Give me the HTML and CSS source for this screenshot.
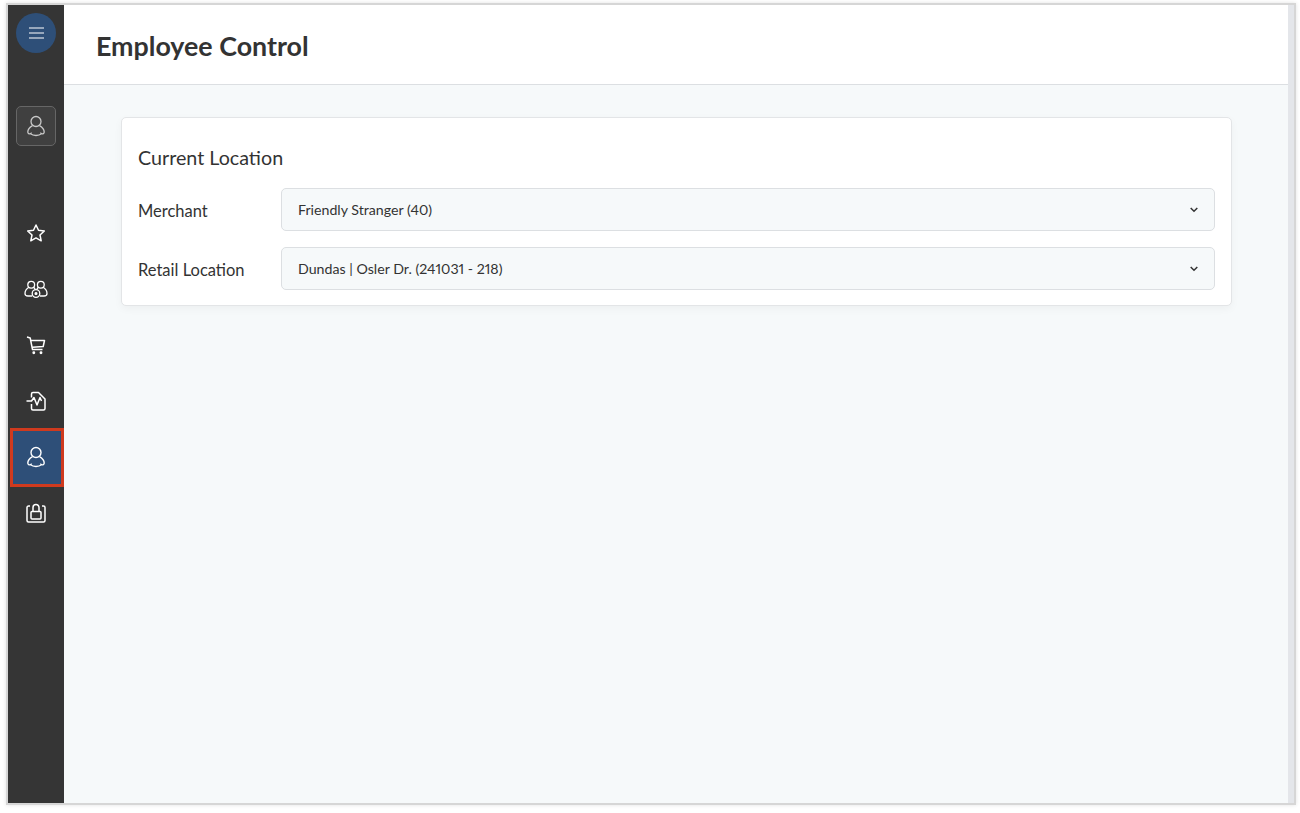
FILE: index.html
```html
<!DOCTYPE html>
<html lang="en">
<head>
<meta charset="utf-8">
<title>Employee Control</title>
<link rel="stylesheet" href="styles.css">
</head>
<body>
<div class="window">
  <aside class="sidebar">
    <button class="menu-btn" aria-label="Menu">
      <svg width="15" height="12" viewBox="0 0 15 12" fill="none" stroke="#fff" stroke-width="1.2"><path d="M0 1h15M0 6h15M0 11h15"/></svg>
    </button>
    <button class="profile-btn" aria-label="Profile">
      <svg class="icon" viewBox="0 0 22 22" fill="none" stroke="#c9c9c9" stroke-width="1.3"><circle cx="11" cy="6.500" r="5"/><path d="M7.500 10.600C5 12 2.800 14.700 2.800 17c0 1.600 1.500 2.300 2.700 1.500.4-.3.800-.5 1.300-.2"/><path d="M14.500 10.600C17 12 19.200 14.700 19.200 17c0 1.600-1.500 2.300-2.700 1.500-.4-.3-.8-.5-1.300-.2"/><path d="M5 18.500c2 1.400 4 2 6 2s4-.6 6-2"/></svg>
    </button>
    <nav class="nav">
      <a class="nav-item"><svg class="icon" viewBox="0 0 22 22" fill="none" stroke="#fff" stroke-width="1.500" stroke-linejoin="round"><path d="M11 3l2.500 5.300 5.800.7-4.300 4 1.200 5.800L11 15.900l-5.200 2.900L7 13 2.700 9l5.800-.7z"/></svg></a>
      <a class="nav-item"><svg class="icon-lg" viewBox="0 0 24 22" fill="none" stroke="#fff" stroke-width="1.300" stroke-linejoin="round"><circle cx="7.200" cy="6.700" r="3.400"/><circle cx="16.800" cy="6.700" r="3.400"/><path d="M4.800 9.300C2.500 10.800 1 13.500 1 15.500c0 1.700 1.500 2.500 3 2.500h4M19.200 9.300c2.300 1.500 3.800 4.200 3.800 6.200 0 1.700-1.500 2.500-3 2.500h-4M9.600 9.300c.8.800 1.200 1.500 1.600 2M14.400 9.300c-.8.800-1.200 1.500-1.600 2"/><circle cx="12" cy="15.500" r="3.800"/><circle cx="12" cy="15.500" r=".9" fill="#fff"/></svg></a>
      <a class="nav-item"><svg class="icon" viewBox="0 0 22 22" fill="none" stroke="#fff" stroke-width="1.500" stroke-linejoin="round"><path d="M2 3l3.200 1 2.300 11.500h10M5.800 6.500h13.700l-1.300 6-10.700.8"/><circle cx="8.800" cy="18.800" r=".7"/><circle cx="16" cy="18.800" r=".7"/></svg></a>
      <a class="nav-item"><svg class="icon" viewBox="0 0 22 22" fill="none" stroke="#fff" stroke-width="1.500" stroke-linejoin="round"><path d="M6.500 7.500V4c0-.9.600-1.500 1.500-1.500h5.500l6.500 6.500v9.500c0 .9-.7 1.500-1.500 1.500H8c-.9 0-1.500-.6-1.500-1.500V14"/><path d="M1.500 11h5L9 7.500l3 7.500 3-7.500 1.500 3.500"/></svg></a>
      <a class="nav-item is-active"><svg class="icon" viewBox="0 0 22 22" fill="none" stroke="#fff" stroke-width="1.400"><circle cx="11" cy="6.500" r="5"/><path d="M7.500 10.600C5 12 2.800 14.700 2.800 17c0 1.600 1.500 2.300 2.700 1.500.4-.3.800-.5 1.300-.2"/><path d="M14.500 10.600C17 12 19.200 14.700 19.200 17c0 1.600-1.500 2.300-2.700 1.500-.4-.3-.8-.5-1.300-.2"/><path d="M5 18.500c2 1.400 4 2 6 2s4-.6 6-2"/></svg></a>
      <a class="nav-item"><svg class="icon" viewBox="0 0 22 22" fill="none" stroke="#fff" stroke-width="1.500" stroke-linejoin="round"><path d="M5 4H3.500C2.700 4 2 4.700 2 5.500v13c0 .8.700 1.500 1.500 1.500h15c.8 0 1.500-.7 1.500-1.500v-13c0-.8-.7-1.500-1.500-1.500H17"/><rect x="6" y="9.500" width="10" height="7.500" rx="1"/><path d="M8 9.500V5.500a3 3 0 0 1 6 0v4"/></svg></a>
    </nav>
  </aside>
  <div class="content">
    <header class="page-header"><h1>Employee Control</h1></header>
    <main class="page-body">
      <section class="card">
        <h2>Current Location</h2>
        <div class="form-row">
          <label>Merchant</label>
          <div class="select"><span>Friendly Stranger (40)</span><svg width="8" height="6" viewBox="0 0 8 6" fill="none" stroke="#333" stroke-width="1.500"><path d="M.7 1l3.300 3.300L7.300 1"/></svg></div>
        </div>
        <div class="form-row">
          <label>Retail Location</label>
          <div class="select"><span>Dundas | Osler Dr. (241031 - 218)</span><svg width="8" height="6" viewBox="0 0 8 6" fill="none" stroke="#333" stroke-width="1.500"><path d="M.7 1l3.300 3.300L7.300 1"/></svg></div>
        </div>
      </section>
    </main>
  </div>
  <div class="scroll-strip"></div>
</div>
</body>
</html>
```
FILE: styles.css
```css
* { box-sizing: border-box; }
html, body { height: 100%; }
body {
  margin: 0;
  padding: 3px 4px 8px 6px;
  background: #fff;
  font-family: Lato, "Liberation Sans", sans-serif;
  color: #333;
  overflow: hidden;
}
.window {
  display: flex;
  height: 802px;
  border: 2px solid #d6d6d6;
  box-shadow: 0 0 4px rgba(0, 0, 0, .12);
}
.sidebar {
  width: 56px;
  flex: none;
  background: #353535;
  display: flex;
  flex-direction: column;
  align-items: center;
  padding-top: 8px;
}
.menu-btn {
  width: 40px;
  height: 40px;
  border-radius: 50%;
  border: 0;
  padding: 0;
  background: #2e4f78;
  display: flex;
  align-items: center;
  justify-content: center;
}
.profile-btn {
  width: 40px;
  height: 40px;
  margin-top: 53px;
  border: 1px solid #666;
  border-radius: 5px;
  padding: 0;
  background: #404040;
  display: flex;
  align-items: center;
  justify-content: center;
}
.nav {
  width: 100%;
  margin-top: 59px;
  display: flex;
  flex-direction: column;
}
.nav-item {
  height: 56px;
  display: flex;
  align-items: center;
  justify-content: center;
  position: relative;
}
.nav-item svg { position: relative; z-index: 1; }
.nav-item.is-active::before {
  content: "";
  position: absolute;
  inset: -1px 0 -2px 2px;
  background: #2e4f78;
  border: 3px solid #cf3a1e;
}
.icon { width: 22px; height: 22px; }
.icon-lg { width: 24px; height: 22px; }
.content {
  flex: 1;
  min-width: 0;
  display: flex;
  flex-direction: column;
  background: #f6f9fa;
}
.page-header {
  height: 80px;
  flex: none;
  background: #fff;
  border-bottom: 1px solid #dcdfe2;
  padding-left: 32px;
  display: flex;
  align-items: center;
}
h1 {
  margin: 2px 0 0;
  font-size: 26.8px;
  font-weight: 700;
  color: #333;
}
.page-body { padding: 32px 56px 32px 57px; }
.card {
  background: #fff;
  border: 1px solid #e3e5e7;
  border-radius: 5px;
  padding: 28px 16px 15px;
  box-shadow: 0 3px 8px rgba(0, 0, 0, .04);
}
h2 {
  margin: 0 0 18px;
  font-size: 19.700px;
  line-height: 24px;
  font-weight: 400;
  color: #333;
}
.form-row {
  display: flex;
  align-items: center;
  height: 43px;
  margin-bottom: 16px;
}
.form-row:last-child { margin-bottom: 0; }
label {
  width: 143px;
  flex: none;
  padding-top: 2px;
  font-size: 16.500px;
}
.select {
  flex: 1;
  height: 43px;
  background: #f6f9fa;
  border: 1px solid #dcdfe2;
  border-radius: 5px;
  padding: 0 16px;
  display: flex;
  align-items: center;
  justify-content: space-between;
  font-size: 14.200px;
  font-variant-numeric: proportional-nums;
}
.scroll-strip {
  width: 6px;
  flex: none;
  background: #e4e6ea;
}
```
